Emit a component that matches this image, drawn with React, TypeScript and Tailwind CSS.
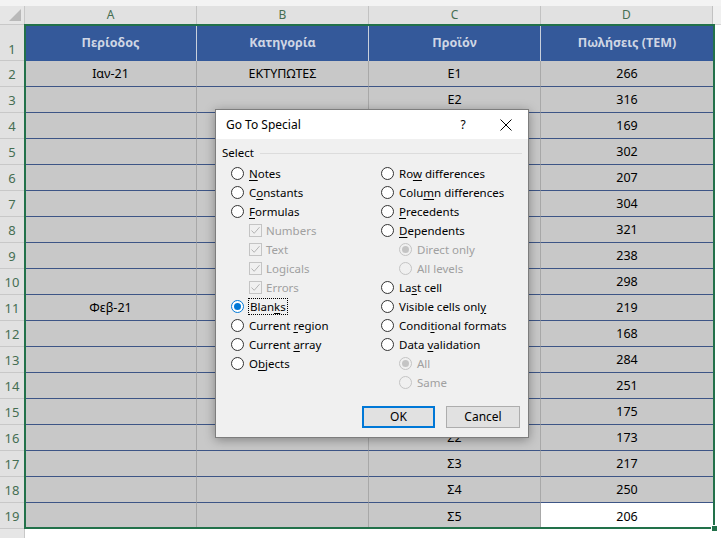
import React from "react";

type Row = [string, string, string, string];

const data: Row[] = [
  ["Ιαν-21", "ΕΚΤΥΠΩΤΕΣ", "Ε1", "266"],
  ["", "", "Ε2", "316"],
  ["", "", "", "169"],
  ["", "", "", "302"],
  ["", "", "", "207"],
  ["", "", "", "304"],
  ["", "", "", "321"],
  ["", "", "", "238"],
  ["", "", "", "298"],
  ["Φεβ-21", "", "", "219"],
  ["", "", "", "168"],
  ["", "", "", "284"],
  ["", "", "", "251"],
  ["", "", "", "175"],
  ["", "", "Σ2", "173"],
  ["", "", "Σ3", "217"],
  ["", "", "Σ4", "250"],
  ["", "", "Σ5", "206"],
];

function Label({ text, u, disabled }: { text: string; u?: number; disabled?: boolean }) {
  const color = disabled ? "text-[#a0a0a0]" : "text-black";
  if (u === undefined) return <span className={color}>{text}</span>;
  return (
    <span className={color}>
      {text.slice(0, u)}
      <span className="underline underline-offset-[2px] decoration-1">{text[u]}</span>
      {text.slice(u + 1)}
    </span>
  );
}

function Radio({ checked, disabled }: { checked?: boolean; disabled?: boolean }) {
  if (disabled) {
    return (
      <span className="w-[13px] h-[13px] rounded-full border border-[#c4c4c4] bg-[#f0f0f0] flex items-center justify-center shrink-0">
        {checked && <span className="w-[7px] h-[7px] rounded-full bg-[#c4c4c4]" />}
      </span>
    );
  }
  if (checked) {
    return (
      <span className="w-[13px] h-[13px] rounded-full border border-[#0078d7] bg-white flex items-center justify-center shrink-0">
        <span className="w-[7px] h-[7px] rounded-full bg-[#0078d7]" />
      </span>
    );
  }
  return <span className="w-[13px] h-[13px] rounded-full border border-[#333333] bg-white shrink-0" />;
}

function Check() {
  return (
    <span className="w-[13px] h-[13px] border border-[#c4c4c4] bg-[#f0f0f0] flex items-center justify-center shrink-0">
      <svg width="11" height="11" viewBox="0 0 11 11">
        <path d="M1.5 5.5 L4.2 8.3 L9.5 2.2" fill="none" stroke="#b4b4b4" strokeWidth="1" />
      </svg>
    </span>
  );
}

type Item =
  | { kind: "radio"; text: string; u?: number; checked?: boolean; focus?: boolean }
  | { kind: "check"; text: string }
  | { kind: "sub"; text: string; checked?: boolean };

const leftItems: Item[] = [
  { kind: "radio", text: "Notes", u: 0 },
  { kind: "radio", text: "Constants", u: 1 },
  { kind: "radio", text: "Formulas", u: 0 },
  { kind: "check", text: "Numbers" },
  { kind: "check", text: "Text" },
  { kind: "check", text: "Logicals" },
  { kind: "check", text: "Errors" },
  { kind: "radio", text: "Blanks", u: 4, checked: true, focus: true },
  { kind: "radio", text: "Current region", u: 8 },
  { kind: "radio", text: "Current array", u: 8 },
  { kind: "radio", text: "Objects", u: 1 },
];

const rightItems: Item[] = [
  { kind: "radio", text: "Row differences", u: 2 },
  { kind: "radio", text: "Column differences", u: 4 },
  { kind: "radio", text: "Precedents", u: 0 },
  { kind: "radio", text: "Dependents", u: 0 },
  { kind: "sub", text: "Direct only", checked: true },
  { kind: "sub", text: "All levels" },
  { kind: "radio", text: "Last cell", u: 2 },
  { kind: "radio", text: "Visible cells only", u: 17 },
  { kind: "radio", text: "Conditional formats", u: 5 },
  { kind: "radio", text: "Data validation", u: 5 },
  { kind: "sub", text: "All", checked: true },
  { kind: "sub", text: "Same" },
];

function ItemRow({ item }: { item: Item }) {
  if (item.kind === "radio") {
    return (
      <div className="h-[19px] flex items-center gap-[4px]">
        <Radio checked={item.checked} />
        {item.focus ? (
          <span className="border border-dotted border-black px-[1px] leading-[15px]">
            <Label text={item.text} u={item.u} />
          </span>
        ) : (
          <span className="pl-[1px]">
            <Label text={item.text} u={item.u} />
          </span>
        )}
      </div>
    );
  }
  if (item.kind === "check") {
    return (
      <div className="h-[19px] flex items-center gap-[4px] pl-[18px]">
        <Check />
        <Label text={item.text} disabled />
      </div>
    );
  }
  return (
    <div className="h-[19px] flex items-center gap-[4px] pl-[18px]">
      <Radio checked={item.checked} disabled />
      <span className="pl-[1px]">
        <Label text={item.text} disabled />
      </span>
    </div>
  );
}

function Dialog() {
  return (
    <div className="absolute left-[215px] top-[109px] w-[314px] h-[329px] border border-[#7d7d7d] bg-[#f0f0f0] shadow-[0_2px_10px_rgba(0,0,0,0.35)] font-['Noto_Sans',sans-serif] text-[11.5px] flex flex-col">
      <div className="h-[29px] bg-white flex items-center pl-[10px] pr-[14px] text-[12px] text-black">
        <span className="flex-1">Go To Special</span>
        <span className="w-[20px] text-center mr-[27px]">?</span>
        <svg width="12" height="12" viewBox="0 0 12 12" className="mr-[2px]">
          <path d="M0.5 0.5 L11.5 11.5 M11.5 0.5 L0.5 11.5" stroke="#000" strokeWidth="1" />
        </svg>
      </div>
      <div className="flex items-center h-[14px] mt-[7px] pl-[6px] pr-[6px] gap-[6px]">
        <span className="text-black">Select</span>
        <span className="flex-1 h-px bg-[#dcdcdc]" />
      </div>
      <div className="flex mt-[4px] pl-[15px]">
        <div className="w-[150px] flex flex-col">
          {leftItems.map((it, i) => (
            <ItemRow key={i} item={it} />
          ))}
        </div>
        <div className="flex flex-col">
          {rightItems.map((it, i) => (
            <ItemRow key={i} item={it} />
          ))}
        </div>
      </div>
      <div className="flex justify-end gap-[11px] pr-[8px] mt-[14px]">
        <button className="w-[73px] h-[22px] border-2 border-[#0078d7] bg-[#e1e1e1] text-black text-[12px] flex items-center justify-center">
          OK
        </button>
        <button className="w-[74px] h-[22px] border border-[#adadad] bg-[#e1e1e1] text-black text-[12px] flex items-center justify-center">
          Cancel
        </button>
      </div>
    </div>
  );
}

const cellFont = "font-['Noto_Sans',sans-serif] text-[12.5px]";

export default function App() {
  return (
    <div className="relative w-[721px] h-[538px] overflow-hidden bg-white">
      <div className="h-[6px] bg-[#f3f3f3]" />
      {/* column headers */}
      <div className="flex h-[19px]">
        <div className="w-[25px] bg-[#e6e6e6] border-r border-b border-[#c8c8c8] relative">
          <svg width="14" height="14" viewBox="0 0 14 14" className="absolute right-[2px] bottom-[2px]">
            <path d="M13 1 L13 13 L1 13 Z" fill="#b9b9b9" />
          </svg>
        </div>
        {["A", "B", "C", "D"].map((c) => (
          <div
            key={c}
            className="w-[172px] bg-[#e1e1e1] border-r border-b border-[#c2c2c2] flex items-center justify-center text-[12px] text-[#456e52] font-['Noto_Sans',sans-serif]"
          >
            {c}
          </div>
        ))}
        <div className="flex-1 bg-[#f0f0f0] border-b border-[#d6d6d6]" />
      </div>
      {/* row 1 */}
      <div className="flex h-[36px]">
        <div className="w-[25px] bg-[#e1e1e1] border-r border-b border-[#c8c8c8] flex items-end justify-center pb-[1px] text-[13px] text-[#456e52] font-['Noto_Sans',sans-serif]">
          1
        </div>
        {["Περίοδος", "Κατηγορία", "Προϊόν", "Πωλήσεις (ΤΕΜ)"].map((h, i) => (
          <div
            key={i}
            className={`w-[172px] bg-[#34599a] ${i < 3 ? "border-r border-[#c9d0dc]" : ""} flex items-center justify-center font-bold text-[#cfd6e4] ${cellFont}`}
          >
            {h}
          </div>
        ))}
        <div className="flex-1" />
      </div>
      {data.map((r, ri) => {
        const last = ri === data.length - 1;
        return (
          <div key={ri} className="flex h-[26px]">
            <div className="w-[25px] bg-[#e1e1e1] border-r border-b border-[#c8c8c8] flex items-end justify-center pb-[2px] text-[13px] text-[#456e52] font-['Noto_Sans',sans-serif]">
              {ri + 2}
            </div>
            {r.map((v, ci) => (
              <div
                key={ci}
                className={`w-[172px] ${last && ci === 3 ? "bg-white" : "bg-[#c8c8c8]"} ${last ? "" : "border-b border-b-[#3d5586]"} ${ci < 3 ? "border-r border-r-[#a8a8a8]" : ""} flex items-center justify-center pt-[2px] text-black ${cellFont}`}
              >
                {v}
              </div>
            ))}
            <div className="flex-1" />
          </div>
        );
      })}
      <div className="flex h-[20px]">
        <div className="w-[25px] bg-[#e6e6e6] border-r border-[#c8c8c8]" />
        <div className="flex-1" />
      </div>
      {/* selection outline */}
      <div className="absolute left-[24px] top-[24px] w-[691px] h-[505px] border-2 border-[#22714a] pointer-events-none" />
      <div className="absolute left-[711px] top-[525px] w-[7px] h-[7px] bg-[#22714a] border border-white" />
      <Dialog />
    </div>
  );
}
